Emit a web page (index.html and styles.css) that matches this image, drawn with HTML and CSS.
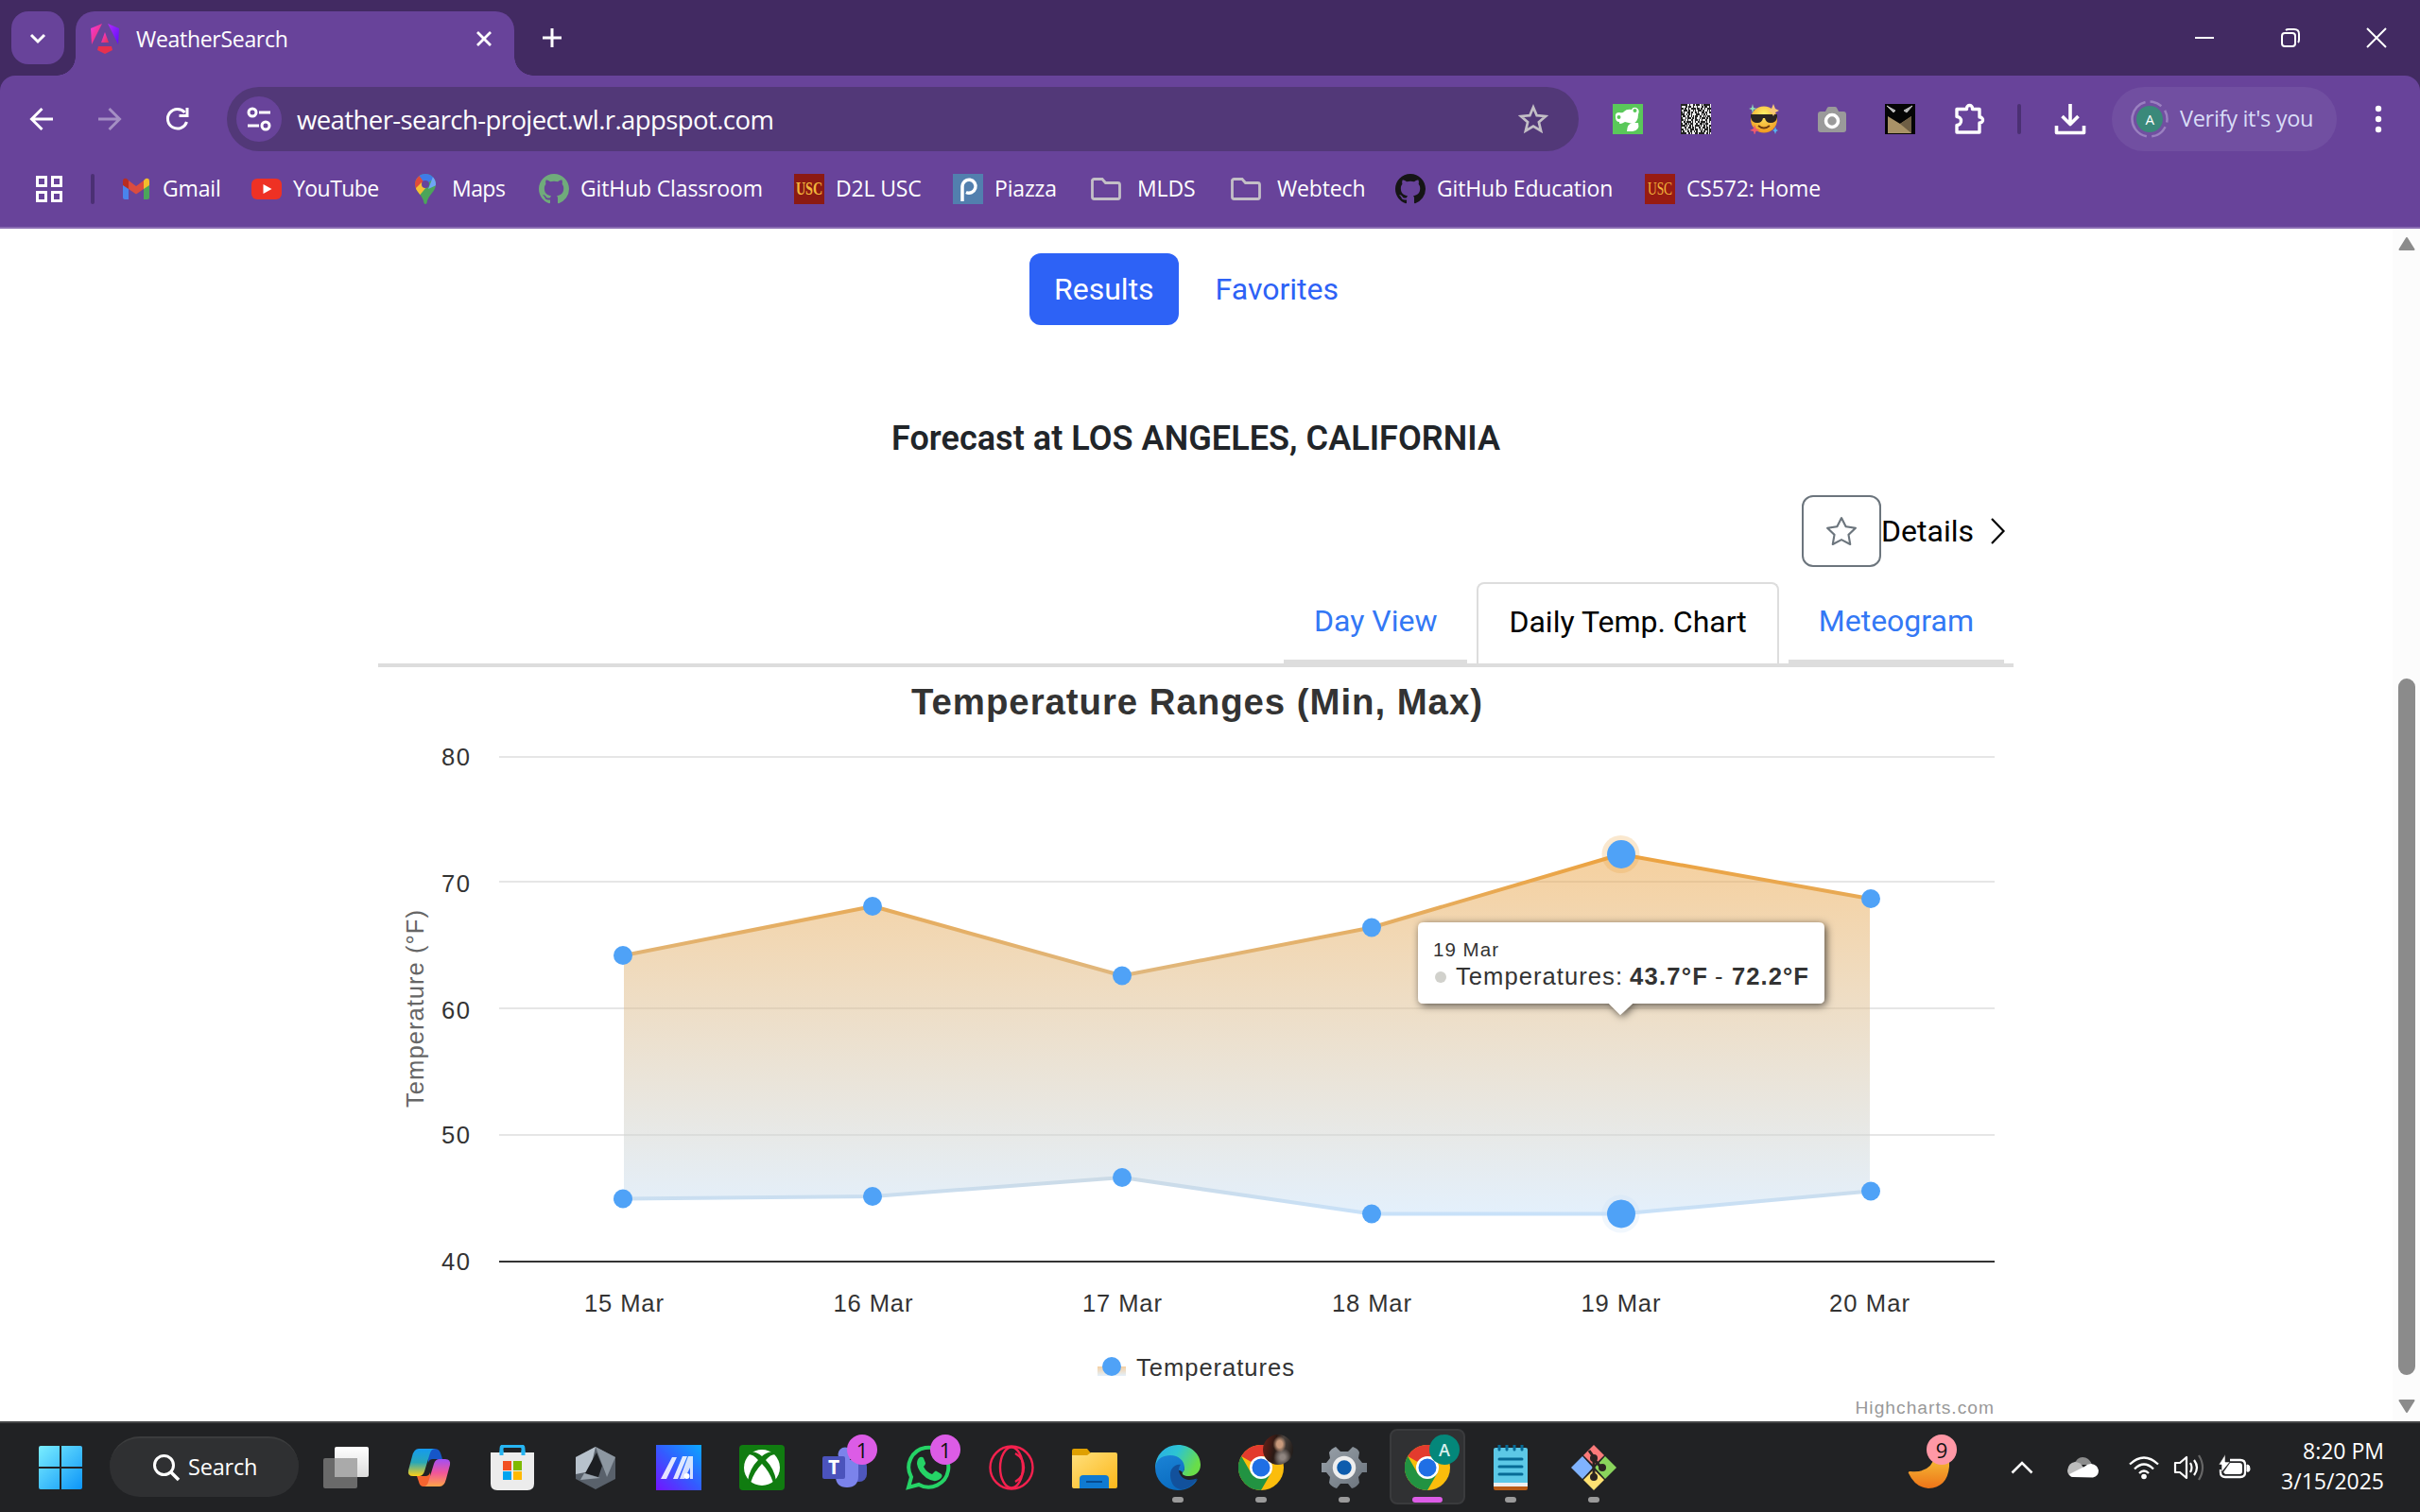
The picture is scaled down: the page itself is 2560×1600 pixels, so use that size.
FILE: index.html
```html
<!DOCTYPE html>
<html lang="en">
<head>
<meta charset="utf-8">
<title>WeatherSearch</title>
<link rel="stylesheet" href="styles.css">
</head>
<body>
<header class="tabstrip">
  <div class="tab-search"><svg width="20" height="20" viewBox="0 0 20 20"><path d="M3 7l7 7 7-7" fill="none" stroke="#fff" stroke-width="3"/></svg></div>
  <div class="tab">
    <svg class="tab-icon" width="32" height="34" viewBox="0 0 32 34">
      <defs><linearGradient id="ng1" x1="0" y1="0" x2="1" y2="1"><stop offset="0" stop-color="#f637e3"/><stop offset="1" stop-color="#e8344b"/></linearGradient>
      <linearGradient id="ng2" x1="0" y1="0" x2="1" y2="1"><stop offset="0" stop-color="#b32df5"/><stop offset="1" stop-color="#5c0bff"/></linearGradient></defs>
      <path d="M13 1L1 6l1 17z" fill="url(#ng1)"/><path d="M19 1l12 5-1 17z" fill="url(#ng2)"/>
      <path d="M16 10l4 11h-8z" fill="url(#ng1)"/><path d="M9 25h14l1 4-8 4-8-4z" fill="#e8304e"/>
    </svg>
    <span class="tab-title seg">WeatherSearch</span>
    <svg class="tab-close" width="20" height="20" viewBox="0 0 20 20"><path d="M3 3l14 14M17 3L3 17" stroke="#fff" stroke-width="2.8"/></svg>
  </div>
  <svg class="new-tab" width="22" height="22" viewBox="0 0 22 22"><path d="M11 1v20M1 11h20" stroke="#fff" stroke-width="3"/></svg>
  <div class="win-controls">
    <svg width="22" height="22" viewBox="0 0 22 22"><path d="M1 11h20" stroke="#fff" stroke-width="2"/></svg>
    <svg width="22" height="22" viewBox="0 0 22 22" fill="none" stroke="#fff" stroke-width="2"><rect x="2" y="6" width="14" height="14" rx="3"/><path d="M6 3q1-1 3-1h6q5 0 5 5v6q0 2-1 3"/></svg>
    <svg width="22" height="22" viewBox="0 0 22 22"><path d="M1 1l20 20M21 1L1 21" stroke="#fff" stroke-width="2"/></svg>
  </div>
</header>
<div class="toolbar-wrap">
<nav class="toolbar">
  <svg class="nav-icon" width="26" height="26" viewBox="0 0 26 26"><path d="M25 13H3M13.500 2L2.500 13l11 11" fill="none" stroke="#fff" stroke-width="3"/></svg>
  <svg class="nav-icon" width="26" height="26" viewBox="0 0 26 26"><path d="M1 13h22M12.500 2l11 11-11 11" fill="none" stroke="#a48fc4" stroke-width="3"/></svg>
  <svg class="nav-icon" width="26" height="26" viewBox="0 0 26 26"><path d="M22.500 16A10.300 10.300 0 1 1 20.500 6" fill="none" stroke="#fff" stroke-width="3"/><path d="M24.500 1v10H14.500V8h7V1z" fill="#fff"/></svg>
  <div class="omnibox">
    <div class="site-info"><svg width="26" height="26" viewBox="0 0 26 26" fill="none" stroke="#fff" stroke-width="3"><circle cx="6" cy="6" r="4"/><path d="M13 6h12M1 20h12"/><circle cx="20" cy="20" r="4"/></svg></div>
    <span class="url seg">weather-search-project.wl.r.appspot.com</span>
    <svg class="star" width="32" height="32" viewBox="0 0 32 32"><path d="M16 3.500l3.700 8.700 9.300.8-7.100 6.200 2.200 9.200-8.100-4.900-8.100 4.900 2.200-9.200L3 13l9.300-.8z" fill="none" stroke="#c3bfc6" stroke-width="2.700"/></svg>
  </div>
  <div class="extensions">
    <svg width="32" height="32" viewBox="0 0 32 32"><rect width="32" height="32" fill="#5ac85a"/><path d="M3 14q-1-5 4-5 4 1 5-1 3-3 8-2 1-3 5-2 4 2 2 7 0 8-6 10l-8-2Q6 23 7 19q-4 0-4-5z" fill="#fff"/><path d="M15 29q0-8 6-9l6 0q2 8-6 9z" fill="#fff"/><circle cx="23.500" cy="7" r="2" fill="#5ac85a"/><circle cx="6.500" cy="14" r="2" fill="#5ac85a"/></svg>
    <svg width="32" height="32" viewBox="0 0 32 32"><rect width="32" height="32" fill="#eee"/><g stroke="#222" stroke-width="1.800">
      <path d="M0 1h32" stroke-dasharray="7 2 1 3 2 1 4 2 1 1"/><path d="M0 3h32" stroke-dasharray="1 4 2 1 3 2 1 3"/><path d="M0 5h32" stroke-dasharray="3 1 2 2 1 2 5 1"/><path d="M0 7h32" stroke-dasharray="1 2 4 1 2 3 1 1"/><path d="M0 9h32" stroke-dasharray="2 1 1 3 3 1 2 2"/><path d="M0 11h32" stroke-dasharray="4 2 1 1 2 1 1 4"/><path d="M0 13h32" stroke-dasharray="1 1 3 2 2 2 1 1"/><path d="M0 15h32" stroke-dasharray="2 3 1 1 4 1 2 1"/><path d="M0 17h32" stroke-dasharray="3 1 1 2 1 3 2 2"/><path d="M0 19h32" stroke-dasharray="1 2 2 1 5 1 1 2"/><path d="M0 21h32" stroke-dasharray="2 2 3 1 1 1 3 3"/><path d="M0 23h32" stroke-dasharray="5 1 1 2 2 1 1 2"/><path d="M0 25h32" stroke-dasharray="1 3 2 2 3 1 2 1"/><path d="M0 27h32" stroke-dasharray="3 2 1 1 1 2 4 1"/><path d="M0 29h32" stroke-dasharray="1 1 2 3 2 1 2 2"/><path d="M0 31h32" stroke-dasharray="6 2 2 1 1 3 3 1"/></g></svg>
    <svg width="32" height="32" viewBox="0 0 32 32"><defs><radialGradient id="em" cx=".5" cy=".3" r=".7"><stop offset="0" stop-color="#fff06a"/><stop offset="1" stop-color="#f09a1e"/></radialGradient></defs><circle cx="16" cy="16.500" r="14" fill="url(#em)"/><path d="M2 11h28v3q-1 6-7 6-5 0-6-5h-2q-1 5-6 5-6 0-7-6z" fill="#2a2422"/><path d="M10 23q6 5 12 0" fill="none" stroke="#6b3a10" stroke-width="2"/><path d="M4 0l1 4 4 1-4 1-1 4-1-4-3-1 3-1z" fill="#8fe0b8"/><path d="M26 0l2 5 4 2-4 2-2 4-2-4-4-2 4-2z" fill="#f8c777"/><path d="M6 22l1.500 4 4 2-4 1-1.500 4-1-4-4-1 4-2z" fill="#ef5a6f"/><path d="M28 24l1 3 2 1-2 1-1 3-1-3-2-1 2-1z" fill="#56b4f2"/></svg>
    <svg width="32" height="32" viewBox="0 0 32 32"><path d="M1 11q0-3 3-3h5l2-4q.500-1 2-1h6q1.500 0 2 1l2 4h5q3 0 3 3v16q0 3-3 3H4q-3 0-3-3z" fill="#9a9a9a"/><circle cx="16" cy="18" r="6.500" fill="#9a9a9a" stroke="#fff" stroke-width="3.500"/></svg>
    <svg width="32" height="32" viewBox="0 0 32 32"><rect width="32" height="32" fill="#050505"/><path d="M3 31V13l13 8 12-8v18z" fill="#a99267"/><path d="M16 21l12-8v18z" fill="#6f5f45"/><path d="M2 2l9 5-2 2zM29 2l-9 5 3 2z" fill="#bbb" stroke="#bbb"/></svg>
    <svg width="34" height="34" viewBox="0 0 34 34"><path d="M4 6.500h10.500V5.500a3 3 0 0 1 6 0v1H28V15h.5a3 3 0 0 1 0 6H28v10H4v-7.500a4.500 4.500 0 0 0 0-9z" fill="none" stroke="#fff" stroke-width="3.400" stroke-linejoin="round"/></svg>
  </div>
  <i class="divider"></i>
  <svg class="download" width="34" height="34" viewBox="0 0 34 34"><path d="M17 1v21M8.500 14l8.500 8.500 8.500-8.500M2.500 24v7.500h29V24" fill="none" stroke="#fff" stroke-width="3.600" stroke-linejoin="round"/></svg>
  <div class="profile">
    <svg width="40" height="40" viewBox="0 0 40 40"><circle cx="20" cy="20" r="18.500" fill="none" stroke="#9a80c0" stroke-width="2.500" stroke-dasharray="50 5 13 6 13 5 18 6"  transform="rotate(100 20 20)"/><circle cx="20" cy="20" r="14" fill="#3a897a"/><text x="20" y="25.500" text-anchor="middle" class="avatar-letter">A</text></svg>
    <span class="seg verify">Verify it's you</span>
  </div>
  <svg class="menu" width="8" height="30" viewBox="0 0 8 30"><circle cx="4" cy="4" r="3.200"/><circle cx="4" cy="15" r="3.200"/><circle cx="4" cy="26" r="3.200"/></svg>
</nav>
<nav class="bookmarks">
  <svg class="apps" width="28" height="28" viewBox="0 0 28 28"><path d="M1.500 1.500h9v9h-9zM17.500 1.500h9v9h-9zM1.500 17.500h9v9h-9zM17.500 17.500h9v9h-9z" fill="none" stroke="#fff" stroke-width="3"/></svg>
  <i class="divider"></i>
  <a><svg width="32" height="32" viewBox="0 0 32 32"><path d="M2 8v17q0 2 2 2h4V13z" fill="#4a84ec"/><path d="M30 8v17q0 2-2 2h-4V13z" fill="#4ba55a"/><path d="M24 7v9l6-4V8q0-4-4-3z" fill="#f3bd2c"/><path d="M2 8q0-4 4-3l2 2v9l-6-4z" fill="#b92d21"/><path d="M8 7l8 6 8-6v9l-8 5.500L8 16z" fill="#db4c3f"/></svg><span class="seg">Gmail</span></a>
  <a><svg width="32" height="32" viewBox="0 0 32 32"><rect y="5" width="32" height="22" rx="6" fill="#ee3124"/><path d="M12.500 11l9 5-9 5z" fill="#fff"/></svg><span class="seg tight">YouTube</span></a>
  <a><svg width="32" height="32" viewBox="0 0 32 32"><defs><clipPath id="pin"><path d="M16 0a11 11 0 0 1 11 11c0 8-9 12-9.500 20q-1.500 2-3 0C14 23 5 19 5 11A11 11 0 0 1 16 0z"/></clipPath></defs><g clip-path="url(#pin)"><rect width="32" height="32" fill="#4ba55a"/><path d="M0 0h32L14 13z" fill="#3f7be8"/><path d="M0 0h8l8 11-12 9z" fill="#e04a3a"/><path d="M3 18l9-9 5 5-9 11z" fill="#f5bf35"/><path d="M24 3l8 0v7l-13 6z" fill="#6fa5f5"/></g><circle cx="16" cy="11" r="4" fill="#68439a"/></svg><span class="seg tight">Maps</span></a>
  <a><svg width="32" height="32" viewBox="0 0 16 16"><path fill="#70ab7b" d="M8 0C3.580 0 0 3.580 0 8c0 3.540 2.290 6.530 5.470 7.590.4.070.55-.17.55-.38 0-.19-.01-.82-.01-1.490-2.010.37-2.530-.49-2.690-.94-.09-.23-.48-.94-.82-1.130-.28-.15-.68-.52-.01-.53.63-.01 1.080.58 1.230.82.720 1.210 1.870.87 2.330.66.070-.52.280-.87.510-1.070-1.780-.2-3.640-.89-3.640-3.950 0-.87.310-1.590.82-2.150-.08-.2-.36-1.020.08-2.120 0 0 .67-.21 2.200.82.640-.18 1.320-.27 2-.27s1.360.09 2 .27c1.530-1.040 2.200-.82 2.200-.82.440 1.100.16 1.920.08 2.120.51.56.82 1.270.82 2.150 0 3.070-1.870 3.750-3.650 3.950.29.25.54.73.54 1.480 0 1.070-.01 1.930-.01 2.200 0 .21.15.46.55.38A8.010 8.010 0 0 0 16 8c0-4.420-3.580-8-8-8z"/></svg><span class="seg">GitHub Classroom</span></a>
  <a><svg width="32" height="32" viewBox="0 0 32 32"><rect width="32" height="32" fill="#8c1a12"/><text x="2" y="22" textLength="28" lengthAdjust="spacingAndGlyphs" class="usc usc-bold">USC</text></svg><span class="seg">D2L USC</span></a>
  <a><svg width="32" height="32" viewBox="0 0 32 32"><rect width="32" height="32" fill="#527fae"/><path d="M10 29V13a7 7 0 1 1 4 6.500" fill="none" stroke="#fff" stroke-width="3.500"/></svg><span class="seg">Piazza</span></a>
  <a class="folder"><svg width="32" height="32" viewBox="0 0 32 32"><path d="M1.500 6v18.500q0 2 2 2h25q2 0 2-2V11.500q0-2-2-2H15.500L12 5.500H3.500q-2 0-2 2z" fill="none" stroke="#c3bfc6" stroke-width="2.800"/></svg><span class="seg">MLDS</span></a>
  <a class="folder"><svg width="32" height="32" viewBox="0 0 32 32"><path d="M1.500 6v18.500q0 2 2 2h25q2 0 2-2V11.500q0-2-2-2H15.500L12 5.500H3.500q-2 0-2 2z" fill="none" stroke="#c3bfc6" stroke-width="2.800"/></svg><span class="seg">Webtech</span></a>
  <a><svg width="32" height="32" viewBox="0 0 16 16"><path fill="#151515" d="M8 0C3.580 0 0 3.580 0 8c0 3.540 2.290 6.530 5.470 7.590.4.070.55-.17.55-.38 0-.19-.01-.82-.01-1.490-2.010.37-2.530-.49-2.690-.94-.09-.23-.48-.94-.82-1.130-.28-.15-.68-.52-.01-.53.63-.01 1.080.58 1.230.82.720 1.210 1.870.87 2.330.66.070-.52.280-.87.510-1.070-1.780-.2-3.640-.89-3.640-3.950 0-.87.310-1.590.82-2.150-.08-.2-.36-1.020.08-2.120 0 0 .67-.21 2.200.82.640-.18 1.320-.27 2-.27s1.360.09 2 .27c1.530-1.040 2.200-.82 2.200-.82.440 1.100.16 1.920.08 2.120.51.56.82 1.270.82 2.150 0 3.070-1.870 3.750-3.650 3.950.29.25.54.73.54 1.480 0 1.070-.01 1.930-.01 2.200 0 .21.15.46.55.38A8.010 8.010 0 0 0 16 8c0-4.420-3.580-8-8-8z"/></svg><span class="seg">GitHub Education</span></a>
  <a><svg width="32" height="32" viewBox="0 0 32 32"><rect width="32" height="32" fill="#981b12"/><text x="3" y="22" textLength="26" lengthAdjust="spacingAndGlyphs" class="usc">USC</text></svg><span class="seg">CS572: Home</span></a>
</nav>
</div>
<div class="viewport">
<main>
  <div class="pills"><button class="pill active">Results</button><button class="pill">Favorites</button></div>
  <h1>Forecast at LOS ANGELES, CALIFORNIA</h1>
  <div class="actions">
    <button class="fav"><svg width="32" height="32" viewBox="0 0 16 16"><path fill="#6c757d" d="M2.866 14.850c-.078.444.36.791.746.593l4.390-2.256 4.389 2.256c.386.198.824-.149.746-.592l-.83-4.730 3.522-3.356c.33-.314.16-.888-.282-.95l-4.898-.696L8.465.792a.513.513 0 0 0-.927 0L5.354 5.120l-4.898.696c-.441.062-.612.636-.283.95l3.523 3.356-.83 4.730zm4.905-2.767-3.686 1.894.694-3.957a.56.56 0 0 0-.163-.505L1.710 6.745l4.052-.576a.53.53 0 0 0 .393-.288L8 2.223l1.847 3.658a.53.53 0 0 0 .393.288l4.052.575-2.906 2.770a.56.56 0 0 0-.163.506l.694 3.957-3.686-1.894a.5.5 0 0 0-.461 0z"/></svg></button>
    <span class="details">Details</span>
    <svg class="chev" width="17" height="30" viewBox="0 0 17 30"><path d="M2 2l12.500 13L2 28" fill="none" stroke="#000" stroke-width="2.200"/></svg>
  </div>
  <div class="view-tabs"><a class="vt">Day View</a><a class="vt on">Daily Temp. Chart</a><a class="vt">Meteogram</a></div>
  <svg class="chart" width="1730" height="798" viewBox="400 706 1730 798">
    <defs>
      <linearGradient id="heat" gradientUnits="userSpaceOnUse" x1="0" y1="904" x2="0" y2="1285"><stop offset="0" stop-color="#eca23f"/><stop offset="1" stop-color="#c8e1f9"/></linearGradient>
      <linearGradient id="leg" x1="0" y1="0" x2="0" y2="1"><stop offset="0" stop-color="#f5cfa0"/><stop offset="1" stop-color="#e3f0fc"/></linearGradient>
      <filter id="shadow" x="-10%" y="-30%" width="120%" height="170%"><feDropShadow dx="2" dy="2" stdDeviation="4" flood-color="#000" flood-opacity=".65"/></filter>
    </defs>
    <text class="chart-title" x="964" y="756" textLength="604">Temperature Ranges (Min, Max)</text>
    <path d="M528 801H2110M528 933H2110M528 1067H2110M528 1201H2110" stroke="#e6e6e6" stroke-width="2"/>
    <path d="M528 1335H2110" stroke="#333" stroke-width="2"/>
    <path d="M660 1011L923.500 959L1187 1032.500L1451 981.500L1714.500 904L1978 951V1260.500L1714.500 1284.500H1451L1187 1246L923.500 1266L660 1268.500z" fill="url(#heat)" fill-opacity=".5"/>
    <path d="M660 1011L923.500 959L1187 1032.500L1451 981.500L1714.500 904L1978 951M660 1268.500L923.500 1266L1187 1246L1451 1284.500H1714.500L1978 1260.500" fill="none" stroke="url(#heat)" stroke-width="4" stroke-linejoin="round"/>
    <circle cx="1714.500" cy="904" r="20" fill="#eca23f" fill-opacity=".25"/><circle cx="1714.500" cy="1284.500" r="20" fill="#c8e1f9" fill-opacity=".25"/>
    <g fill="#4fa2f7">
      <circle cx="659" cy="1011" r="10"/><circle cx="923" cy="959" r="10"/><circle cx="1187" cy="1032.500" r="10"/><circle cx="1451" cy="981.500" r="10"/><circle cx="1715" cy="904" r="15"/><circle cx="1979" cy="951" r="10"/>
      <circle cx="659" cy="1268.500" r="10"/><circle cx="923" cy="1266" r="10"/><circle cx="1187" cy="1246" r="10"/><circle cx="1451" cy="1284.500" r="10"/><circle cx="1715" cy="1284.500" r="15"/><circle cx="1979" cy="1260.500" r="10"/>
    </g>
    <g class="labels">
      <text x="467" y="810" textLength="30">80</text><text x="467" y="944" textLength="30">70</text><text x="467" y="1078" textLength="30">60</text><text x="467" y="1210" textLength="30">50</text><text x="467" y="1344" textLength="30">40</text>
      <text x="618" y="1388" textLength="84">15 Mar</text><text x="881.500" y="1388" textLength="84">16 Mar</text><text x="1145" y="1388" textLength="84">17 Mar</text><text x="1409" y="1388" textLength="84">18 Mar</text><text x="1672.500" y="1388" textLength="84">19 Mar</text><text x="1935" y="1388" textLength="85">20 Mar</text>
      <text x="1202" y="1456" textLength="167">Temperatures</text>
      <text class="axis-title" transform="translate(447.500 1172) rotate(-90)" textLength="209">Temperature (°F)</text>
    </g>
    <rect x="1161" y="1446" width="30" height="10" fill="url(#leg)"/><circle cx="1176" cy="1446" r="10" fill="#4fa2f7"/>
    <text class="credits" x="1962.500" y="1496" textLength="146.500">Highcharts.com</text>
    <path d="M1506 976H1924q6 0 6 6V1056q0 6-6 6H1727L1714 1074L1702 1062H1506q-6 0-6-6V982q0-6 6-6z" fill="#fff" filter="url(#shadow)"/>
    <circle cx="1524" cy="1034" r="6" fill="#d1d1cc"/>
    <text class="tip-head" x="1516" y="1012" textLength="69">19 Mar</text>
    <g class="labels"><text x="1540" y="1042" textLength="176">Temperatures:</text><text class="b" x="1724" y="1042" textLength="82">43.7°F</text><text x="1814" y="1042">-</text><text class="b" x="1832" y="1042" textLength="81">72.2°F</text></g>
  </svg>
</main>
<aside class="scrollbar"><svg width="18" height="14" viewBox="0 0 18 14"><path d="M9 1l7.500 12h-15z" fill="#8b8b8b" stroke="#8b8b8b" stroke-width="2" stroke-linejoin="round"/></svg><i></i><svg width="18" height="14" viewBox="0 0 18 14"><path d="M9 13L1.500 1h15z" fill="#8b8b8b" stroke="#8b8b8b" stroke-width="2" stroke-linejoin="round"/></svg></aside>
</div>
<footer class="taskbar">
  <div class="cell"><svg width="48" height="48" viewBox="0 0 48 48"><defs><linearGradient id="win" gradientUnits="userSpaceOnUse" x1="0" y1="0" x2="48" y2="48"><stop offset="0" stop-color="#7df0ff"/><stop offset="1" stop-color="#0a93f8"/></linearGradient></defs><path d="M3 1h20v22H1V3q0-2 2-2zM25 1h20q2 0 2 2v20H25zM1 25h22v22H3q-2 0-2-2zM25 25h22v20q0 2-2 2H25z" fill="url(#win)"/></svg></div>
  <div class="search"><svg width="30" height="30" viewBox="0 0 30 30"><circle cx="12.500" cy="12.500" r="10" fill="none" stroke="#fff" stroke-width="3"/><path d="M19.500 19.500l8.500 8.500" stroke="#fff" stroke-width="3.500"/></svg><span class="seg">Search</span></div>
  <div class="cell"><svg width="48" height="48" viewBox="0 0 48 48"><defs><linearGradient id="tv" x1="0" y1="0" x2="0" y2="1"><stop offset="0" stop-color="#fff"/><stop offset="1" stop-color="#dcdcdc"/></linearGradient></defs><rect x="12" y="2" width="36" height="32" rx="2" fill="url(#tv)"/><rect y="14" width="36" height="32" rx="2" fill="#777" fill-opacity=".85"/><rect x="12" y="14" width="24" height="20" fill="#aaa"/></svg></div>
  <div class="cell"><svg width="46" height="44" viewBox="0 0 46 44"><defs><linearGradient id="cp1" x1="0" y1="0" x2="0" y2="1"><stop offset="0" stop-color="#159af0"/><stop offset=".5" stop-color="#28a7b8"/><stop offset="1" stop-color="#ffcf16"/></linearGradient><linearGradient id="cp2" x1="0" y1="0" x2="0" y2="1"><stop offset="0" stop-color="#a14ff5"/><stop offset=".5" stop-color="#f0569a"/><stop offset="1" stop-color="#ffa447"/></linearGradient></defs><path d="M21 2h8q5 0 6.500 6l1.500 5H27q-4 0-5 4z" fill="#1656c8"/><path d="M25 42h-8q-4 0-5-5l-2-6h9q4 0 5-4z" fill="#f5642f"/><path d="M12 2h17q-4 0-5.500 6L18 26q-1.500 5-6 5H6q-6 0-5-6L5 10q2-8 7-8z" fill="url(#cp1)"/><path d="M34 42H17q4 0 5.500-6L28 18q1.500-5 6-5h6q6 0 5 6l-4 15q-2 8-7 8z" fill="url(#cp2)"/></svg></div>
  <div class="cell"><svg width="48" height="48" viewBox="0 0 48 48"><path d="M12.500 12V4q0-3 3-3h17q3 0 3 3v8" fill="none" stroke="#27b5f2" stroke-width="4"/><path d="M1 8h46v33q0 7-7 7H8q-7 0-7-7z" fill="#ececec"/><path d="M12.500 6v5M35.500 6v5" stroke="#27b5f2" stroke-width="4"/><path fill="#f25022" d="M14 17h9v10h-9z"/><path fill="#7fba00" d="M25 17h9v10h-9z"/><path fill="#00a4ef" d="M14 28h9v9h-9z"/><path fill="#ffb900" d="M25 28h9v9h-9z"/></svg></div>
  <div class="cell"><svg width="48" height="48" viewBox="0 0 48 48"><path d="M24 2l21 11v23L24 47 3 36V13z" fill="#59616b"/><path d="M24 2L3 13v18l15-3z" fill="#b8c2cc"/><path d="M24 2l21 11-9 21z" fill="#8d97a1"/><path d="M25 8l-12 22 14 4 4-12 5 12z" fill="#1c1e22"/><path d="M12 30l17 5-21 2z" fill="#9aa4ae"/></svg></div>
  <div class="cell"><svg width="48" height="48" viewBox="0 0 48 48"><defs><linearGradient id="ma" x1="0" y1="1" x2="1" y2="0"><stop offset="0" stop-color="#7412ff"/><stop offset=".5" stop-color="#335cff"/><stop offset="1" stop-color="#0aa8ff"/></linearGradient></defs><path d="M0 0h48v48H0z" fill="url(#ma)"/><path d="M17 13h5L11 36H5zM28 12h5L23 36h-5z" fill="#fff" fill-opacity=".85"/><path d="M34 12h5v24h-3V24l-6 12h-5z" fill="#fff" fill-opacity=".8"/><circle cx="32.500" cy="33" r="3" fill="#fff"/></svg></div>
  <div class="cell"><svg width="48" height="48" viewBox="0 0 48 48"><rect width="48" height="48" rx="4" fill="#107c10"/><circle cx="24" cy="24" r="19" fill="#fff"/><path d="M12 8q5-2 12 4 7-6 12-4l2 2q-5 0-10 6 9 9 11 22l-3 2Q32 28 24 20 16 28 12 40l-3-2q2-13 11-22-5-6-10-6z" fill="#107c10"/></svg></div>
  <div class="cell"><svg width="48" height="48" viewBox="0 0 48 48"><circle cx="24" cy="10" r="7.500" fill="#7b83eb"/><rect x="30" y="15" width="17" height="24" rx="8" fill="#4f57bd"/><path d="M14 16h24v17q0 12-12 12T14 33z" fill="#7b83eb"/><rect y="12" width="24" height="24" rx="2" fill="#4b53bc"/><text x="12" y="31" text-anchor="middle" class="teams">T</text></svg><b class="badge">1</b></div>
  <div class="cell"><svg width="48" height="48" viewBox="0 0 48 48"><path d="M3 45l3-11a21 21 0 1 1 8 8z" fill="none" stroke="#25d366" stroke-width="4"/><path d="M15 13q3-1 4 1l2 5q.500 1-2 4 3 6 9 8l3-3q1-1 2 0l5 3q2 3-3 6-5 3-13-2Q13 28 12 20q0-5 3-7z" fill="#25d366"/></svg><b class="badge">1</b></div>
  <div class="cell"><svg width="48" height="48" viewBox="0 0 48 48" fill="none" stroke="#f5214e" stroke-width="2.400"><circle cx="24" cy="24" r="22.500"/><ellipse cx="24" cy="24" rx="12" ry="21.500"/><path d="M28 9q9 5 9 15t-9 15"/></svg></div>
  <div class="cell"><svg width="48" height="48" viewBox="0 0 48 48"><defs><linearGradient id="fo" x1="0" y1="0" x2="1" y2="1"><stop offset="0" stop-color="#ffe07c"/><stop offset="1" stop-color="#fcb71a"/></linearGradient></defs><path d="M0 6q0-2 2-2h14l5 6v12H0z" fill="#dfa000"/><path d="M0 11h16l4-3h26q2 0 2 2v34q0 2-2 2H2q-2 0-2-2z" fill="url(#fo)"/><path d="M8 46V36q0-4 4-4h23q4 0 4 4v10z" fill="#0f7ad2"/><path d="M15 39h17" stroke="#064b91" stroke-width="2"/></svg></div>
  <div class="cell run"><svg width="48" height="48" viewBox="0 0 48 48"><defs><linearGradient id="ed" x1="0" y1="0" x2="1" y2=".4"><stop offset="0" stop-color="#29abe8"/><stop offset=".5" stop-color="#2dc4d2"/><stop offset="1" stop-color="#69dd49"/></linearGradient><linearGradient id="ed2" x1="0" y1="0" x2=".4" y2="1"><stop offset="0" stop-color="#1b83d6"/><stop offset="1" stop-color="#0a6cc0"/></linearGradient></defs><path d="M0 24A24 24 0 0 1 24 0c14 0 24 10 24 21 0 8-6 12-12 12-6 0-8-2-7-4 2-2 2-4 2-6z" fill="url(#ed)"/><path d="M0 24C1 14 9 11 16 11c9 0 15 6 15 13 0 2-1 4-2 5-5-6-13 2-8 9 6 8 18 4 24-2C41 44 33 48 24 48A24 24 0 0 1 0 24z" fill="url(#ed2)"/><path d="M16 32c0-8 6-12 11-11-4 4-2 15 9 16 4 0 8-2 8-1-4 7-10 11-17 11-8-1-11-9-11-15z" fill="#12519c"/></svg></div>
  <div class="cell run"><svg width="48" height="48" viewBox="0 0 48 48"><circle cx="24" cy="24" r="24" fill="#fbbd0c"/><path d="M24 24L3.200 12A24 24 0 0 1 44.800 12H24z" fill="#e33b2e"/><path d="M3.200 12A24 24 0 0 0 24 48L34.400 30 24 24 13.600 30z" fill="#229342"/><circle cx="24" cy="24" r="12" fill="#fff"/><circle cx="24" cy="24" r="9.500" fill="#1f6fe5"/></svg><b class="badge photo"></b></div>
  <div class="cell run"><svg width="48" height="48" viewBox="0 0 48 48"><defs><linearGradient id="gr" x1="0" y1="0" x2="1" y2="1"><stop offset="0" stop-color="#9aa2aa"/><stop offset="1" stop-color="#69727b"/></linearGradient></defs><path d="M15 2l5 5h8l5-5q6 2 7 6l-1 6 4 5h5q2 5 0 10h-5l-4 5 1 6q-3 5-8 6l-4-5h-8l-4 5q-6-2-8-6l1-6-4-5H0q-1-5 0-10h5l4-5-1-6q2-4 7-6z" fill="url(#gr)"/><circle cx="24" cy="24" r="10" fill="#0d5cad" stroke="#eee" stroke-width="4.500"/></svg></div>
  <div class="cell run current"><svg width="48" height="48" viewBox="0 0 48 48"><circle cx="24" cy="24" r="24" fill="#fbbd0c"/><path d="M24 24L3.200 12A24 24 0 0 1 44.800 12H24z" fill="#e33b2e"/><path d="M3.200 12A24 24 0 0 0 24 48L34.400 30 24 24 13.600 30z" fill="#229342"/><circle cx="24" cy="24" r="12" fill="#fff"/><circle cx="24" cy="24" r="9.500" fill="#1f6fe5"/></svg><b class="badge letter">A</b></div>
  <div class="cell run"><svg width="48" height="48" viewBox="0 0 48 48"><path d="M6 40h36v6q0 2-2 2H8q-2 0-2-2z" fill="#b85a14"/><path d="M6 38h36v6H6z" fill="#eee"/><path d="M6 5q0-2 2-2h32q2 0 2 2v35H6z" fill="#5cc8e6"/><path d="M12 0v5M20 0v5M28 0v5M36 0v5M12 15h24M12 23h24M12 31h24" stroke="#076b96" stroke-width="3" stroke-linecap="round"/></svg></div>
  <div class="cell run"><svg width="48" height="48" viewBox="0 0 48 48"><path d="M24 0l11 11-11 11-11-11z" fill="#fb7a7a"/><path d="M12 12l11 12-11 12L0 24z" fill="#80b3ff"/><path d="M36 12l12 12-12 12-11-12z" fill="#8ad45c"/><path d="M24 26l11 11-11 11-11-11z" fill="#ffe273"/><path d="M19 6l5 7v21M24 15l8 9" fill="none" stroke="#2a2322" stroke-width="3"/><g fill="#2a2322"><circle cx="24" cy="14" r="4"/><circle cx="33" cy="24" r="4"/><circle cx="24" cy="34" r="4"/></g></svg></div>
  <div class="tray">
    <div class="moon"><svg width="46" height="44" viewBox="0 0 46 44"><defs><linearGradient id="mo" x1="0" y1="0" x2="0" y2="1"><stop offset="0" stop-color="#f5c23a"/><stop offset="1" stop-color="#ee7418"/></linearGradient></defs><path d="M44 8v12q-2 22-22 23Q8 42 1 27q-1-2 2-2 22 2 26-17z" fill="url(#mo)"/></svg><b class="badge pink">9</b></div>
    <svg class="t-chev" width="24" height="14" viewBox="0 0 24 14"><path d="M1.500 12.500L12 2l10.500 10.500" fill="none" stroke="#fff" stroke-width="2.600"/></svg>
    <svg class="t-cloud" width="33" height="22" viewBox="0 0 33 22"><path d="M7 8Q10 0 16 0q7 0 10 8z" fill="#8c8c8c"/><path d="M17 11L5 21q-5-2-5-7 1-8 8-9 6 0 9 6z" fill="#bdbdbd"/><path d="M6 21q-3 0-4-3l16-8q3-3 7-3 7 1 8 7 0 6-6 7.500z" fill="#fff"/></svg>
    <svg class="t-wifi" width="34" height="26" viewBox="0 0 34 26"><path d="M2 9.500q15-14 30 0M7 14.500q10-10 20 0M12 19q5-5 10 0" fill="none" stroke="#fff" stroke-width="2.300"/><circle cx="17" cy="22.500" r="2.800" fill="#fff"/></svg>
    <svg class="t-vol" width="34" height="30" viewBox="0 0 34 30" fill="none" stroke="#fff" stroke-width="2.200"><path d="M2 10h5l7-6v22l-7-6H2z" stroke-linejoin="round"/><path d="M18 10q3 5 0 10M22 7q6 8 0 16"/><path d="M27 2q8 13 0 26" stroke="#666"/></svg>
    <svg class="t-bat" width="36" height="28" viewBox="0 0 36 28"><path d="M13 6h11q5 0 5 5v8q0 5-5 5H8q-5 0-5-5v-3" fill="none" stroke="#fff" stroke-width="2.300"/><path d="M31 11q3 0 3 4t-3 3z" fill="#fff" stroke="#fff"/><path d="M13 9h10q3 0 3 3v6q0 3-3 3H8l-2-2z" fill="#fff"/><path d="M8 0v8h5L4 19v-8H1z" fill="#fff" stroke="#222" stroke-width=".6"/></svg>
    <div class="clock"><span class="seg">8:20 PM</span><span class="seg">3/15/2025</span></div>
  </div>
</footer>
</body>
</html>
```
FILE: styles.css
```css
*, *::before, *::after { box-sizing: border-box; }
body { margin: 0; width: 2560px; height: 1600px; overflow: hidden; display: flex; flex-direction: column; background: #fff; font-family: Roboto, "Liberation Sans", sans-serif; }
svg { display: block; flex: none; }
button { font: inherit; border: 0; padding: 0; background: none; }
.seg { font-family: "Open Sans", "Noto Sans", sans-serif; white-space: nowrap; }

.tabstrip { height: 80px; background: #422a62; display: flex; align-items: flex-start; padding: 12px 36px 0 12px; }
.tab-search { width: 56px; height: 56px; border-radius: 18px; background: #68439a; display: flex; align-items: center; justify-content: center; }
.tab { position: relative; width: 464px; height: 68px; margin-left: 12px; border-radius: 20px 20px 0 0; background: #68439a; display: flex; align-items: center; padding: 0 22px 10px 15px; color: #fff; }
.tab::before, .tab::after { content: ""; position: absolute; bottom: 0; width: 20px; height: 20px; }
.tab::before { left: -20px; background: radial-gradient(circle at 0 0, transparent 19.500px, #68439a 20px); }
.tab::after { right: -20px; background: radial-gradient(circle at 100% 0, transparent 19.500px, #68439a 20px); }
.tab-title { margin-left: 17px; flex: none; font-size: 23px; letter-spacing: -.3px; }
.tab-close { margin-left: auto; }
.new-tab { margin: 17px 0 0 29px; }
.win-controls { margin: 17px -1px 0 auto; display: flex; gap: 69px; }

.toolbar-wrap { background: #422a62; height: 162px; flex: none; }
.toolbar { height: 92px; background: #68439a; border-radius: 16px 16px 0 0; display: flex; align-items: center; padding-left: 31px; }
.nav-icon { margin-right: 46px; }
.omnibox { width: 1430px; height: 68px; margin-left: -7px; border-radius: 34px; background: #523878; display: flex; align-items: center; padding: 0 32px 0 10px; color: #fff; }
.site-info { width: 48px; height: 48px; border-radius: 50%; background: #68439a; display: flex; align-items: center; justify-content: center; }
.url { margin-left: 16px; font-size: 27.500px; letter-spacing: -.58px; }
.star { margin-left: auto; }
.extensions { display: flex; align-items: center; gap: 40px; margin-left: 36px; }
.divider { width: 4px; height: 32px; border-radius: 2px; background: #4b3073; }
.toolbar .divider { margin-left: 34px; }
.download { margin-left: 35px; }
.profile { width: 238px; height: 68px; margin-left: 27px; border-radius: 34px; background: #714fa1; display: flex; align-items: center; padding-left: 20px; color: #d9dcf7; font-size: 23.500px; letter-spacing: -.3px; }
.profile .seg { margin-left: 12px; padding-bottom: 2px; }
.avatar-letter { font: 15px "Open Sans", sans-serif; fill: #fff; }
.menu { margin-left: 40px; fill: #fff; }
.bookmarks { height: 70px; background: #68439a; border-bottom: 2px solid #8a6cb2; display: grid; grid-template-columns: 58px 32px 138px 168px 136px 270px 168px 146px 148px 174px 264px 240px; align-items: center; padding: 0 0 13px 38px; color: #fff; font-size: 23px; letter-spacing: -.15px; }
.bookmarks a { display: flex; align-items: center; gap: 12px; }
.bookmarks .seg { padding-bottom: 2px; }
.bookmarks .tight { letter-spacing: -.55px; }
.bookmarks .folder { gap: 17px; }
.usc { font: 19px "Liberation Serif", serif; fill: #f3b63c; }
.usc-bold { font-weight: bold; }

.viewport { flex: none; height: 1262px; display: flex; }
main { width: 2531px; padding: 26px 401px 0 400px; }
.scrollbar { width: 29px; background: #fcfcfc; display: flex; flex-direction: column; align-items: center; padding: 9px 0 9px; }
.scrollbar i { width: 18px; height: 737px; margin: auto 0 26px; border-radius: 9px; background: #8b8b8b; }
.pills { display: flex; margin-left: 689px; font-size: 32px; }
.pill { height: 76px; padding: 0 26px; border-radius: 12px; color: #2d62f6; margin-left: 13px; }
.pill.active { margin-left: 0; background: #2d62f6; color: #fff; }
h1 { margin: 96px 0 0; font-size: 36px; line-height: 48px; font-weight: 600; letter-spacing: .05px; text-align: center; color: #212529; }
.actions { display: flex; align-items: center; justify-content: flex-end; margin-top: 36px; height: 76px; padding-right: 8px; font-size: 32px; color: #000; }
.fav { width: 84px; height: 76px; border: 2px solid #6c757d; border-radius: 12px; display: flex; align-items: center; justify-content: center; }
.chev { margin-left: 17px; }
.view-tabs { height: 90px; margin-top: 16px; border-bottom: 4px solid #ddd; display: flex; justify-content: flex-end; padding-right: 10px; gap: 10px; font-size: 32px; line-height: 82px; text-align: center; color: #3378f5; }
.vt { border-bottom: 4px solid #ddd; padding: 0 32px; }
.vt.on { border: 2px solid #ddd; border-bottom: 0; border-radius: 8px 8px 0 0; color: #000; line-height: 80px; }
.chart { font-family: "Liberation Sans", Arial, sans-serif; }
.chart-title { font-size: 38.400px; font-weight: bold; fill: #333; }
.labels { font-size: 25.600px; fill: #333; }
.axis-title { fill: #666; }
.tip-head { font-size: 20.500px; fill: #333; }
.b { font-weight: bold; }
.credits { font-size: 19.200px; fill: #999; }

.taskbar { height: 96px; flex: none; background: #212224; border-top: 2px solid #444546; display: flex; align-items: center; padding-left: 20px; color: #fff; }
.cell { position: relative; width: 88px; height: 94px; flex: none; display: flex; align-items: center; justify-content: center; }
.search { width: 200px; height: 64px; margin: 0 6px 2px 8px; border-radius: 32px; background: #2f3032; border-top: 2px solid #3b3c3d; display: flex; align-items: center; padding-left: 45px; font-size: 23.500px; letter-spacing: -.2px; }
.search .seg { margin-left: 8px; padding-bottom: 3px; }
.badge { position: absolute; left: 46px; top: 12px; width: 32px; height: 32px; border-radius: 50%; background: #dc5ce6; color: #111; font: 22px/32px "Open Sans", sans-serif; text-align: center; }
.badge.photo { background: radial-gradient(ellipse at 55% 32%, #c99a7c 0 12%, transparent 28%), radial-gradient(circle at 65% 75%, #8f8580 0 8%, transparent 30%), linear-gradient(100deg, #6b2018, #2a1a14 40%, #4c4440 60%, #191310); }
.badge.letter { background: #04877a; color: #d6f0ec; font-size: 18px; font-weight: 600; }
.run::after { content: ""; position: absolute; left: 38px; bottom: 10px; width: 12px; height: 6px; border-radius: 3px; background: #9a9a9a; }
.current::before { content: ""; position: absolute; z-index: -1; left: 4px; top: 6px; width: 80px; height: 80px; border-radius: 8px; background: #303133; border: 2px solid #3a3b3d; }
.current { z-index: 0; }
.current::after { left: 28px; width: 32px; background: #dc5ce6; }
.tray { margin-left: auto; display: flex; align-items: center; padding-right: 38px; }
.moon { position: relative; height: 94px; padding-top: 26px; }
.badge.pink { left: 20px; background: #ff98a6; }
.teams { font: bold 21px "Open Sans", sans-serif; fill: #fff; }
.t-chev { margin-left: 63px; }
.t-cloud { margin-left: 36px; }
.t-wifi { margin-left: 31px; }
.t-vol { margin-left: 14px; }
.t-bat { margin-left: 13px; }
.clock { width: 110px; margin-left: 30px; padding-bottom: 4px; font-size: 23px; line-height: 32px; display: flex; flex-direction: column; align-items: flex-end; }
```
